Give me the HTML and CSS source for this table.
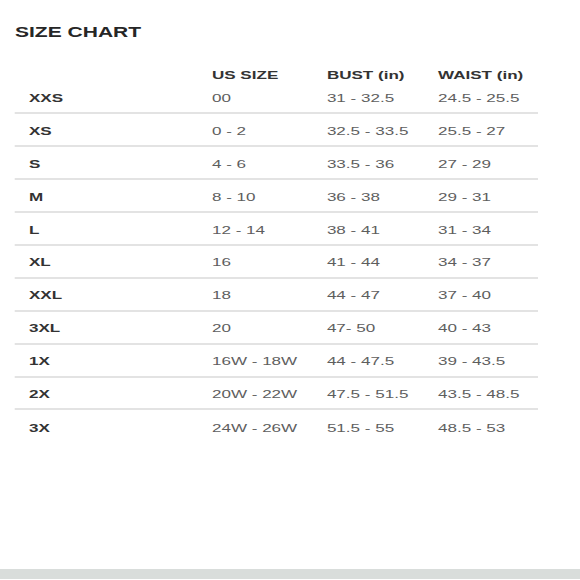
FILE: index.html
```html
<!DOCTYPE html>
<html>
<head>
<meta charset="utf-8">
<link rel="stylesheet" href="styles.css">
</head>
<body>
<div class="screen">
  <div class="chart">
    <h1 class="title">SIZE CHART</h1>
    <div class="row head">
      <span></span><span>US SIZE</span><span>BUST (in)</span><span>WAIST (in)</span>
    </div>
    <div class="row"><span class="lbl">XXS</span><span>00</span><span>31 - 32.5</span><span>24.5 - 25.5</span></div>
    <div class="row"><span class="lbl">XS</span><span>0 - 2</span><span>32.5 - 33.5</span><span>25.5 - 27</span></div>
    <div class="row"><span class="lbl">S</span><span>4 - 6</span><span>33.5 - 36</span><span>27 - 29</span></div>
    <div class="row"><span class="lbl">M</span><span>8 - 10</span><span>36 - 38</span><span>29 - 31</span></div>
    <div class="row"><span class="lbl">L</span><span>12 - 14</span><span>38 - 41</span><span>31 - 34</span></div>
    <div class="row"><span class="lbl">XL</span><span>16</span><span>41 - 44</span><span>34 - 37</span></div>
    <div class="row"><span class="lbl">XXL</span><span>18</span><span>44 - 47</span><span>37 - 40</span></div>
    <div class="row"><span class="lbl">3XL</span><span>20</span><span>47- 50</span><span>40 - 43</span></div>
    <div class="row"><span class="lbl">1X</span><span>16W - 18W</span><span>44 - 47.5</span><span>39 - 43.5</span></div>
    <div class="row"><span class="lbl">2X</span><span>20W - 22W</span><span>47.5 - 51.5</span><span>43.5 - 48.5</span></div>
    <div class="row last"><span class="lbl">3X</span><span>24W - 26W</span><span>51.5 - 55</span><span>48.5 - 53</span></div>
  </div>
  <div class="bar"></div>
</div>
</body>
</html>
```
FILE: styles.css
```css
html, body {
  margin: 0;
  padding: 0;
  background: #fff;
}
.screen {
  width: 580px;
  height: 580px;
  display: flex;
  flex-direction: column;
  overflow: hidden;
}
.chart {
  width: 394px;
  padding: 24.5px 0 0 10.2px;
  transform: scaleX(1.47);
  transform-origin: 0 0;
  font-family: "Liberation Sans", Arial, sans-serif;
}
.title {
  margin: 0 0 27px 0;
  font-size: 14.3px;
  line-height: 14px;
  font-weight: bold;
  color: #262626;
}
.row {
  width: 356px;
  box-sizing: border-box;
  height: 32.9px;
  padding-left: 9.5px;
  padding-top: 1px;
  display: grid;
  grid-template-columns: 124.5px 78.2px 75.6px 1fr;
  align-items: center;
  font-size: 11.6px;
  line-height: 13px;
  color: #5e5e5e;
  border-bottom: 2px solid #e3e3e3;
  white-space: nowrap;
}
.row.head {
  height: 16px;
  border-bottom: none;
  font-weight: bold;
  color: #333;
}
.row.last {
  border-bottom: none;
}
.lbl {
  font-weight: bold;
  color: #333;
}
.bar {
  margin-top: auto;
  margin-bottom: 1px;
  height: 10px;
  background: #d9dddb;
}
```
